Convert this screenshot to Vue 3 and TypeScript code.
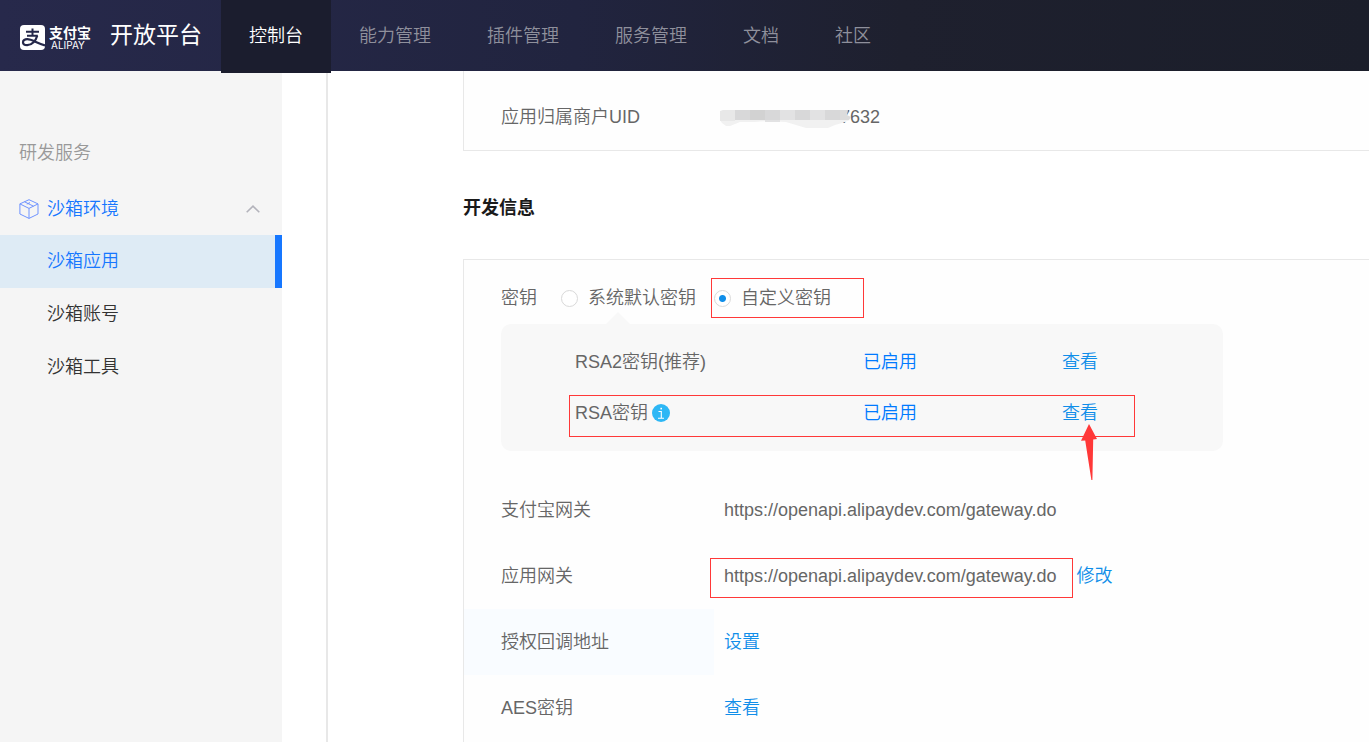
<script setup lang="ts">
import { ref } from 'vue'

interface KeyRow {
  name: string
  status: string
  marked: boolean
}

interface InfoRow {
  label: string
  text?: string
  action?: string
  marked?: boolean
  hovered?: boolean
}

const navItems: string[] = ['控制台', '能力管理', '插件管理', '服务管理', '文档', '社区']
const sideItems: string[] = ['沙箱应用', '沙箱账号', '沙箱工具']
const activeNav = ref('控制台')
const activeSide = ref('沙箱应用')
const keyMode = ref('custom')

const keyRows: KeyRow[] = [
  { name: 'RSA2密钥(推荐)', status: '已启用', marked: false },
  { name: 'RSA密钥', status: '已启用', marked: true },
]

const infoRows: InfoRow[] = [
  { label: '支付宝网关', text: 'https://openapi.alipaydev.com/gateway.do' },
  { label: '应用网关', text: 'https://openapi.alipaydev.com/gateway.do', action: '修改', marked: true },
  { label: '授权回调地址', action: '设置', hovered: true },
  { label: 'AES密钥', action: '查看' },
]
</script>

<template>
  <div class="page">
    <header class="topbar">
      <a class="brand" href="#">
        <svg class="brand-icon" viewBox="0 0 25 25" aria-hidden="true">
          <rect width="25" height="25" rx="4" fill="#fff" />
          <g fill="none" stroke="#25284a" stroke-linecap="butt">
            <path d="M6 6.8H19M12.5 3.4V10.8M7 10.8H17.8" stroke-width="2" />
            <path d="M17.2 10.8C16 15.5 12 20.2 7.2 20.2C4.6 20.2 3 19.2 3 17.2C3 15.4 4.8 14.2 7.2 14.2C12 14.2 16 17.8 25 20.4" stroke-width="2.2" />
          </g>
        </svg>
        <span class="brand-text">
          <span class="brand-cn">支付宝</span>
          <span class="brand-en">ALIPAY</span>
        </span>
        <span class="brand-title">开放平台</span>
      </a>
      <nav class="nav">
        <a
          v-for="item in navItems"
          :key="item"
          href="#"
          class="nav-item"
          :class="{ active: item === activeNav }"
          @click.prevent="activeNav = item"
        >{{ item }}</a>
      </nav>
    </header>

    <div class="body">
      <aside class="sidebar">
        <p class="side-title">研发服务</p>
        <button type="button" class="side-group">
          <svg class="cube" viewBox="0 0 20 20" aria-hidden="true">
            <g fill="none" stroke="#6f93ff" stroke-width="1" stroke-linejoin="round">
              <path d="M10 .7L19 4.9V15L10 19.4L.9 15V4.9Z" />
              <path d="M.9 4.9L10 9.4L19 4.9M10 9.4V19.4M5.5 2.8L14.5 7.2M7.8 5.1L11 3.6" />
            </g>
          </svg>
          <span>沙箱环境</span>
          <svg class="chevron" viewBox="0 0 14 8" aria-hidden="true">
            <path d="M.7 7.3L7 1.2L13.3 7.3" fill="none" stroke="#b3b3bb" stroke-width="1.6" />
          </svg>
        </button>
        <a
          v-for="item in sideItems"
          :key="item"
          href="#"
          class="side-item"
          :class="{ active: item === activeSide }"
          @click.prevent="activeSide = item"
        >{{ item }}</a>
      </aside>

      <main class="main">
        <section class="card card-first">
          <table class="info">
            <tbody>
              <tr>
                <th scope="row">应用归属商户UID</th>
                <td>
                  <span class="uid">7632
                    <svg class="mosaic" viewBox="0 0 131 18" aria-hidden="true">
                      <path d="M0 10H130L122 13L115 15L108 18H86L76 15L66 12L48 11L34 12H20L10 16H6L2 13Z" fill="#f1f1f1" />
                      <path d="M0 1L3 0H15V11H0Z" fill="#e8e8e8" />
                      <path d="M15 0H30V10H15ZM60 10V0H45V10ZM75 0H90V10H75ZM105 0H120V10H105Z" fill="#d8d8d9" />
                      <path d="M30 0H45V10H30Z" fill="#d2d2d2" />
                      <path d="M45 10H60V12H45ZM60 0H75V10H60ZM90 0H105V10H90Z" fill="#e2e2e3" />
                      <path d="M120 0H128L127 5L131 7L129 10H120Z" fill="#dcdcdc" />
                    </svg>
                  </span>
                </td>
              </tr>
            </tbody>
          </table>
        </section>

        <h2 class="heading">开发信息</h2>

        <section class="card card-dev">
          <fieldset class="key-modes">
            <legend class="key-legend">密钥</legend>
            <label class="mode">
              <input v-model="keyMode" type="radio" name="keyMode" value="default" />
              <span>系统默认密钥</span>
            </label>
            <label class="mode">
              <input v-model="keyMode" type="radio" name="keyMode" value="custom" />
              <span>自定义密钥</span>
              <i class="mark mark-mode"></i>
            </label>
          </fieldset>

          <div class="panel">
            <table class="keys">
              <tbody>
                <tr v-for="row in keyRows" :key="row.name">
                  <th scope="row">
                    <span class="key-name">
                      {{ row.name }}
                      <svg v-if="row.marked" class="tip" viewBox="0 0 18 18" aria-hidden="true">
                        <circle cx="9" cy="9" r="9" fill="#2db7f5" />
                        <path d="M6.5 7.5H9.3V14M6 14.3H12" fill="none" stroke="#fff" stroke-width="1.1" />
                        <rect x="8.4" y="3.8" width="1.6" height="1.6" fill="#fff" />
                      </svg>
                    </span>
                  </th>
                  <td class="status">{{ row.status }}</td>
                  <td>
                    <a href="#" class="link view">查看
                      <svg v-if="row.marked" class="arrow" viewBox="0 0 16 56" aria-hidden="true">
                        <path d="M8 0L16 15L12.2 15.6L11.4 56H10.4L4.2 16.4L0 16.8Z" fill="#ff3838" />
                      </svg>
                    </a>
                  </td>
                </tr>
              </tbody>
            </table>
            <i class="mark mark-key"></i>
          </div>

          <table class="info">
            <tbody>
              <tr v-for="row in infoRows" :key="row.label" :class="{ hovered: row.hovered }">
                <th scope="row">{{ row.label }}</th>
                <td>
                  <span v-if="row.text" class="url">{{ row.text }}<i v-if="row.marked" class="mark mark-url"></i></span>
                  <a v-if="row.action" href="#" class="link">{{ row.action }}</a>
                </td>
              </tr>
            </tbody>
          </table>
        </section>
      </main>
    </div>
  </div>
</template>

<style>
body {
  margin: 0;
}
</style>

<style scoped>
.page {
  min-height: 100vh;
  display: flex;
  flex-direction: column;
  font-family: "Liberation Sans", "Noto Sans CJK SC", sans-serif;
  font-size: 18px;
  font-weight: 350;
  line-height: 28px;
  color: #666;
  background: #fff;
}

a {
  text-decoration: none;
}

.topbar {
  position: relative;
  display: flex;
  height: 71px;
  background: linear-gradient(90deg, #27294b 0%, #21243f 42%, #1e202e 66%, #1b1e2a 100%);
}

.brand {
  display: flex;
  align-items: center;
  box-sizing: border-box;
  width: 221px;
  flex: none;
  padding-left: 20px;
  color: #fff;
}

.brand-icon {
  width: 25px;
  height: 25px;
  margin-top: 4px;
}

.brand-text {
  display: flex;
  flex-direction: column;
  width: 44px;
  margin: 4px 17px 0 4px;
}

.brand-cn {
  font-size: 14px;
  font-weight: 700;
  line-height: 15px;
}

.brand-en {
  padding-left: 2px;
  font-family: Inter, sans-serif;
  font-size: 10px;
  font-weight: 400;
  line-height: 9px;
}

.brand-title {
  font-size: 23px;
  font-weight: 400;
  line-height: 28px;
  padding-bottom: 2px;
  white-space: nowrap;
}

.nav {
  display: flex;
}

.nav-item {
  height: 71px;
  padding: 0 28px;
  line-height: 73px;
  color: #8f909c;
  white-space: nowrap;
}

.nav-item.active {
  height: 73px;
  color: #fff;
  background: #1b1d2e;
}

.body {
  display: flex;
  flex: 1;
}

.sidebar {
  width: 282px;
  flex: none;
  background: #f5f5f5;
}

.side-title {
  margin: 68px 0 16px;
  padding-left: 19px;
  color: #999;
}

.side-group {
  display: flex;
  align-items: center;
  gap: 8px;
  width: 100%;
  height: 52px;
  padding: 0 22px 0 19px;
  border: 0;
  background: none;
  font: inherit;
  color: #1677ff;
}

.cube {
  width: 20px;
  height: 20px;
}

.chevron {
  width: 14px;
  height: 8px;
  margin-left: auto;
}

.side-item {
  display: block;
  padding-left: 47px;
  line-height: 53px;
  color: #333;
}

.side-item.active {
  border-right: 7px solid #1677ff;
  background: #deebf5;
  color: #1677ff;
}

.main {
  display: flex;
  flex-direction: column;
  flex: 1;
  min-width: 0;
  margin-left: 44px;
  padding-left: 135px;
  border-left: 2px solid #e8e8e8;
}

.card {
  border-left: 1px solid #e8e8e8;
  background: #fefefe;
}

.card-first {
  padding-top: 13px;
  border-bottom: 1px solid #e8e8e8;
}

.heading {
  margin: 43px 0 37px;
  font-size: 18px;
  font-weight: 700;
  line-height: 28px;
  color: #1a1a1a;
}

.card-dev {
  flex: 1;
  padding-top: 18px;
  border-top: 1px solid #e8e8e8;
}

.info {
  width: 100%;
  border-collapse: collapse;
}

.info th {
  box-sizing: border-box;
  width: 250px;
  height: 66px;
  padding: 0 0 0 37px;
  font-weight: inherit;
  text-align: left;
}

.info td {
  padding: 0 0 0 10px;
}

.info .hovered th {
  background: #f9fcff;
}

.uid {
  position: relative;
  padding-left: 116px;
}

.mosaic {
  position: absolute;
  left: -4px;
  top: 3px;
  width: 131px;
  height: 18px;
}

.link {
  color: #108ee9;
}

.url {
  position: relative;
  margin-right: 20px;
}

.key-modes {
  display: flex;
  align-items: center;
  height: 40px;
  margin: 0;
  padding: 0 0 0 37px;
  border: 0;
}

.key-legend {
  float: left;
  padding: 0;
  margin-right: 24px;
}

.mode {
  position: relative;
  display: flex;
  align-items: center;
  gap: 10px;
  margin-right: 18px;
}

.mode input {
  appearance: none;
  box-sizing: border-box;
  width: 17px;
  height: 17px;
  margin: 0;
  border: 1px solid #d9d9d9;
  border-radius: 50%;
  background: #fff;
}

.mode input:checked {
  background: radial-gradient(circle, #108ee9 0 3px, #fff 4px);
}

.mark {
  position: absolute;
  box-sizing: border-box;
  border: 1px solid #ff3838;
  pointer-events: none;
}

.mark-mode {
  inset: -6px -33px -6px -3px;
}

.mark-key {
  left: 68px;
  right: 88px;
  top: 71px;
  height: 42px;
}

.mark-url {
  inset: -8px -16px -12px -14px;
}

.panel {
  position: relative;
  box-sizing: border-box;
  max-width: 722px;
  margin: 6px 37px 26px;
  padding: 12px 0 13px 74px;
  border-radius: 10px;
  background: #f8f8f8;
}

.panel::before {
  content: "";
  position: absolute;
  left: 105px;
  top: -12px;
  border: 12px solid transparent;
  border-top: 0;
  border-bottom-color: #f8f8f8;
}

.keys {
  width: 100%;
  border-collapse: collapse;
}

.keys th {
  width: 288px;
  height: 51px;
  padding: 0;
  font-weight: inherit;
  text-align: left;
}

.keys td {
  padding: 0;
}

.key-name {
  display: flex;
  align-items: center;
  gap: 4px;
}

.tip {
  width: 18px;
  height: 18px;
}

.keys .status {
  width: 199px;
  color: #007aff;
}

.view {
  position: relative;
}

.arrow {
  position: absolute;
  left: 19px;
  top: 21px;
  width: 16px;
  height: 56px;
}
</style>
